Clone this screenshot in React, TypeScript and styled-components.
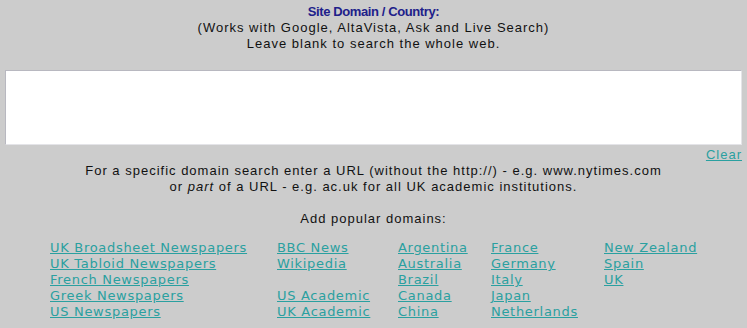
import styled, { createGlobalStyle } from "styled-components";

const Global = createGlobalStyle`
  html, body {
    margin: 0;
    padding: 0;
    background: #cccccc;
  }
  body {
    font-family: "Liberation Sans", Arial, sans-serif;
    font-size: 13px;
    color: #111111;
  }
`;

const Page = styled.div`
  display: flex;
  flex-direction: column;
  align-items: center;
  padding: 4px 5px 0 5px;
  line-height: 16px;
  text-align: center;
  letter-spacing: 1px;
`;

const Title = styled.div`
  font-weight: bold;
  color: #20208a;
  letter-spacing: -0.4px;
`;

const Domains = styled.textarea`
  box-sizing: border-box;
  margin-top: 18px;
  width: 100%;
  height: 75px;
  background: #ffffff;
  border: 1px solid #b8b8c0;
  border-right-color: #e4e4e8;
  border-bottom-color: #e4e4e8;
  resize: none;
  font-family: inherit;
`;

const ClearRow = styled.div`
  align-self: stretch;
  display: flex;
  justify-content: flex-end;
  margin-top: 2px;
`;

const Link = styled.a`
  color: #2aa0a0;
  text-decoration: underline;
  cursor: pointer;
`;

const Note = styled.p`
  margin: 0;
`;

const AddLabel = styled.p`
  margin: 16px 0 13px;
`;

const Grid = styled.div`
  display: grid;
  grid-template-columns: 227px 121px 93px 113px 93px;
  grid-auto-flow: column;
  grid-template-rows: repeat(5, 16px);
  text-align: left;
`;

const DomainLink = styled(Link)`
  font-family: "DejaVu Sans", Verdana, sans-serif;
  font-size: 13px;
  letter-spacing: 0.7px;
  white-space: nowrap;
`;

const columns: (string | null)[][] = [
  ["UK Broadsheet Newspapers", "UK Tabloid Newspapers", "French Newspapers", "Greek Newspapers", "US Newspapers"],
  ["BBC News", "Wikipedia", null, "US Academic", "UK Academic"],
  ["Argentina", "Australia", "Brazil", "Canada", "China"],
  ["France", "Germany", "Italy", "Japan", "Netherlands"],
  ["New Zealand", "Spain", "UK", null, null],
];

export default function App() {
  return (
    <>
      <Global />
      <Page>
        <Title>Site Domain / Country:</Title>
        <div>(Works with Google, AltaVista, Ask and Live Search)</div>
        <div>Leave blank to search the whole web.</div>
        <Domains />
        <ClearRow>
          <Link>Clear</Link>
        </ClearRow>
        <Note>
          For a specific domain search enter a URL (without the http://) - e.g. www.nytimes.com
          <br />
          or <i>part</i> of a URL - e.g. ac.uk for all UK academic institutions.
        </Note>
        <AddLabel>Add popular domains:</AddLabel>
        <Grid>
          {columns.flatMap((col, ci) =>
            col.map((name, ri) => (
              <div key={`${ci}-${ri}`}>{name && <DomainLink>{name}</DomainLink>}</div>
            ))
          )}
        </Grid>
      </Page>
    </>
  );
}
